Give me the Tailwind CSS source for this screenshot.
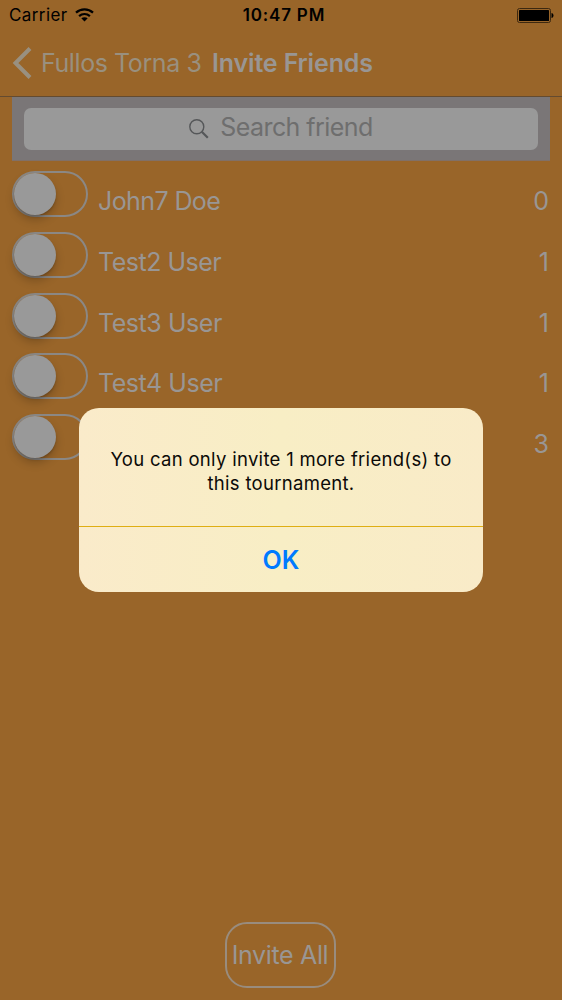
<!DOCTYPE html>
<html lang="en">
<head>
<meta charset="utf-8">
<meta name="viewport" content="width=device-width, initial-scale=1">
<title>Invite Friends</title>
<script src="https://cdn.jsdelivr.net/npm/@tailwindcss/browser@4"></script>
</head>
<body class="relative flex h-[1000px] w-[562px] flex-col overflow-hidden bg-[#996529] font-['Inter',sans-serif] text-[25px] text-[#999694]">
  <header class="flex h-[97px] shrink-0 flex-col border-b border-[#644b30]">
    <div class="grid h-[31px] grid-cols-3 items-center px-[9px] text-[17px] leading-[31px] text-black">
      <div class="flex items-center gap-[7px]">
        <span class="whitespace-nowrap tracking-[0.400px]">Carrier</span>
        <svg class="mb-[1px] h-[14px] w-[19px]" viewBox="0 0 19 14" fill="none" stroke="black" stroke-width="2.2"><path d="M1 4.600C5.700.2 13.300.2 18 4.600"/><path d="M4.100 8.100c3.100-2.800 7.700-2.800 10.800 0"/><path d="M6.300 10.300c1.900-1.500 4.500-1.500 6.400 0L9.500 13.500z" fill="black" stroke="none"/></svg>
      </div>
      <span class="whitespace-nowrap pl-[6px] text-center font-semibold tracking-[0.800px]">10:47 PM</span>
      <svg class="-mr-[1px] h-[15px] w-[37px] justify-self-end" viewBox="0 0 37 15"><rect x=".5" y=".5" width="33" height="14" rx="2" fill="none" stroke="#3c2810"/><rect x="2" y="2" width="30" height="11" rx=".6"/><path d="M34.500 5c2.700.6 2.700 4.400 0 5z"/></svg>
    </div>
    <div class="flex grow items-center pl-[12px] leading-[65px]">
      <svg class="mb-[1px] h-[32px] w-[20px]" viewBox="0 0 20 32" fill="none" stroke="#999080" stroke-width="4"><path d="M18 1.500L3.500 16 18 30.500"/></svg>
      <span class="ml-[9px] w-[170px] whitespace-nowrap tracking-[-0.420px] text-[#99907f]">Fullos Torna 3</span>
      <h1 class="whitespace-nowrap pl-[1px] font-semibold tracking-[-0.150px]">Invite Friends</h1>
    </div>
  </header>

  <main class="flex grow flex-col px-3">
    <div class="flex h-[64px] shrink-0 border-b border-[#817067] bg-[#7a7677] px-3 pt-[11px]">
      <div class="flex h-[42px] grow items-center justify-center rounded-[7px] bg-[#999]">
        <svg class="mr-[11px] h-[20px] w-[20px]" viewBox="0 0 20 20" fill="none" stroke="#555759"><circle cx="7.800" cy="7.800" r="7" stroke-width="1.400"/><path d="M12.800 12.800l6 6" stroke-width="2.200"/></svg>
        <span class="whitespace-nowrap pb-[2px] tracking-[-0.550px] text-[#6e6e6e]">Search friend</span>
      </div>
    </div>
    <ul class="flex flex-col leading-[60px]">
      <li class="flex h-[60.750px] items-start pt-[10px] pr-[1px]">
        <span class="flex h-[46px] w-[76px] shrink-0 rounded-full border-2 border-[#8b8885]"><span class="size-[42px] rounded-full bg-[#999] shadow-[0_5px_10px_rgba(0,0,0,0.2),0_2px_2px_rgba(0,0,0,0.15)]"></span></span>
        <span class="ml-[10px] grow whitespace-nowrap tracking-[-0.600px]">John7 Doe</span><span>0</span>
      </li>
      <li class="flex h-[60.750px] items-start pt-[10px] pr-[1px]">
        <span class="flex h-[46px] w-[76px] shrink-0 rounded-full border-2 border-[#8b8885]"><span class="size-[42px] rounded-full bg-[#999] shadow-[0_5px_10px_rgba(0,0,0,0.2),0_2px_2px_rgba(0,0,0,0.15)]"></span></span>
        <span class="ml-[10px] grow whitespace-nowrap tracking-[-0.500px]">Test2 User</span><span>1</span>
      </li>
      <li class="flex h-[60.750px] items-start pt-[10px] pr-[1px]">
        <span class="flex h-[46px] w-[76px] shrink-0 rounded-full border-2 border-[#8b8885]"><span class="size-[42px] rounded-full bg-[#999] shadow-[0_5px_10px_rgba(0,0,0,0.2),0_2px_2px_rgba(0,0,0,0.15)]"></span></span>
        <span class="ml-[10px] grow whitespace-nowrap tracking-[-0.450px]">Test3 User</span><span>1</span>
      </li>
      <li class="flex h-[60.750px] items-start pt-[10px] pr-[1px]">
        <span class="flex h-[46px] w-[76px] shrink-0 rounded-full border-2 border-[#8b8885]"><span class="size-[42px] rounded-full bg-[#999] shadow-[0_5px_10px_rgba(0,0,0,0.2),0_2px_2px_rgba(0,0,0,0.15)]"></span></span>
        <span class="ml-[10px] grow whitespace-nowrap tracking-[-0.450px]">Test4 User</span><span>1</span>
      </li>
      <li class="flex h-[60.750px] items-start justify-between pt-[10px] pr-[1px]">
        <span class="flex h-[46px] w-[76px] shrink-0 rounded-full border-2 border-[#8b8885]"><span class="size-[42px] rounded-full bg-[#999] shadow-[0_5px_10px_rgba(0,0,0,0.2),0_2px_2px_rgba(0,0,0,0.15)]"></span></span>
        <span>3</span>
      </li>
    </ul>
  </main>

  <footer class="flex justify-center pb-3 pr-[1px]">
    <button class="h-[66px] w-[111px] whitespace-nowrap rounded-[22px] border-2 border-[#999694]/80 leading-[62px] tracking-[-0.350px]"><span class="-ml-[1px]">Invite All</span></button>
  </footer>

  <div role="alertdialog" class="absolute left-[79px] top-[408px] flex h-[184px] w-[404px] flex-col overflow-hidden rounded-[20px] bg-linear-to-r from-[#faebca] via-[#f8eec5] to-[#f9ebc8] text-center">
    <p class="h-[118px] shrink-0 pt-[39px] text-[18.500px] leading-[24px] tracking-[0.300px] text-[#0b0a08]">You can only invite 1 more friend(s) to<br>this tournament.</p>
    <button class="grow border-t border-[#dfae12] font-semibold leading-[66px] text-[#007aff]">OK</button>
  </div>
</body>
</html>
